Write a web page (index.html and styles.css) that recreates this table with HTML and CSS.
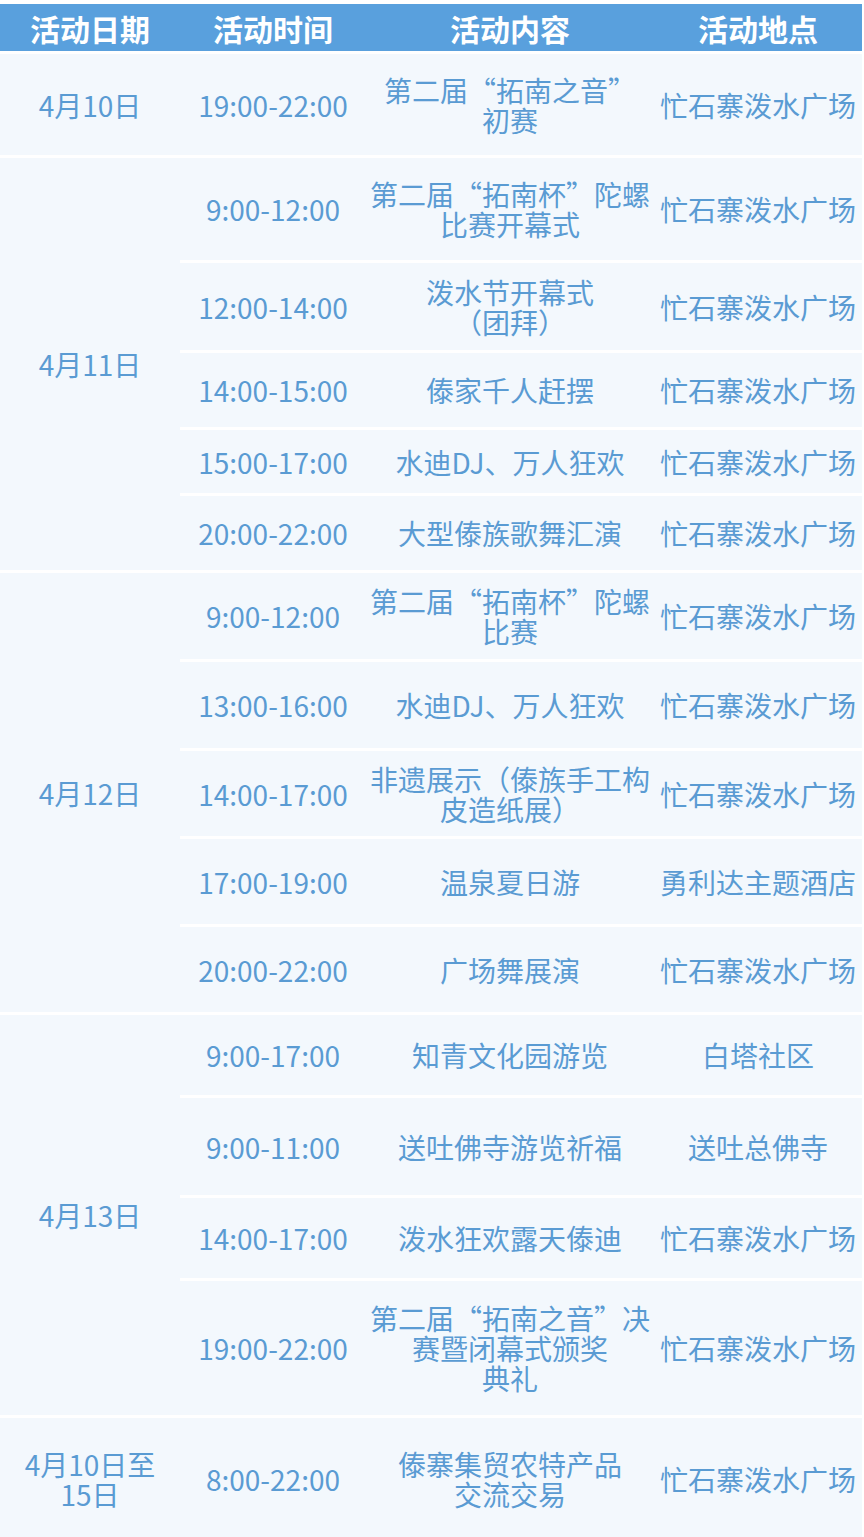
FILE: index.html
```html
<!DOCTYPE html>
<html lang="zh-CN">
<head>
<meta charset="utf-8">
<title>活动安排</title>
<link rel="stylesheet" href="styles.css">
</head>
<body>
<table class="schedule">
  <colgroup>
    <col class="c-date"><col class="c-time"><col class="c-content"><col class="c-place">
  </colgroup>
  <thead>
    <tr class="h-head"><th>活动日期</th><th>活动时间</th><th>活动内容</th><th>活动地点</th></tr>
  </thead>
  <tbody>
    <tr class="h104"><td>4月10日</td><td>19:00-22:00</td><td>第二届“拓南之音”<br>初赛</td><td>忙石寨泼水广场</td></tr>

    <tr class="h105"><td rowspan="5">4月11日</td><td>9:00-12:00</td><td>第二届“拓南杯”陀螺<br>比赛开幕式</td><td>忙石寨泼水广场</td></tr>
    <tr class="h90"><td>12:00-14:00</td><td>泼水节开幕式<br>（团拜）</td><td>忙石寨泼水广场</td></tr>
    <tr class="h77"><td>14:00-15:00</td><td>傣家千人赶摆</td><td>忙石寨泼水广场</td></tr>
    <tr class="h66"><td>15:00-17:00</td><td>水迪DJ、万人狂欢</td><td>忙石寨泼水广场</td></tr>
    <tr class="h77"><td>20:00-22:00</td><td>大型傣族歌舞汇演</td><td>忙石寨泼水广场</td></tr>

    <tr class="h89"><td rowspan="5">4月12日</td><td>9:00-12:00</td><td>第二届“拓南杯”陀螺<br>比赛</td><td>忙石寨泼水广场</td></tr>
    <tr class="h89"><td>13:00-16:00</td><td>水迪DJ、万人狂欢</td><td>忙石寨泼水广场</td></tr>
    <tr class="h88"><td>14:00-17:00</td><td>非遗展示（傣族手工构<br>皮造纸展）</td><td>忙石寨泼水广场</td></tr>
    <tr class="h88"><td>17:00-19:00</td><td>温泉夏日游</td><td>勇利达主题酒店</td></tr>
    <tr class="h88"><td>20:00-22:00</td><td>广场舞展演</td><td>忙石寨泼水广场</td></tr>

    <tr class="h83"><td rowspan="4">4月13日</td><td>9:00-17:00</td><td>知青文化园游览</td><td>白塔社区</td></tr>
    <tr class="h100"><td>9:00-11:00</td><td>送吐佛寺游览祈福</td><td>送吐总佛寺</td></tr>
    <tr class="h83"><td>14:00-17:00</td><td>泼水狂欢露天傣迪</td><td>忙石寨泼水广场</td></tr>
    <tr class="h137"><td>19:00-22:00</td><td>第二届“拓南之音”决<br>赛暨闭幕式颁奖<br>典礼</td><td>忙石寨泼水广场</td></tr>

    <tr class="h124"><td>4月10日至<br>15日</td><td>8:00-22:00</td><td>傣寨集贸农特产品<br>交流交易</td><td>忙石寨泼水广场</td></tr>
  </tbody>
</table>
</body>
</html>
```

FILE: styles.css
```css
html, body {
  margin: 0;
  padding: 0;
  background: #ffffff;
}

body {
  padding-top: 4px;
  font-family: "Noto Sans CJK SC", "Noto Sans", sans-serif;
}

.schedule {
  width: 862px;
  table-layout: fixed;
  border-collapse: separate;
  border-spacing: 0;
}

.c-date { width: 180px; }
.c-time { width: 186px; }
.c-content { width: 288px; }
.c-place { width: 208px; }

.schedule th,
.schedule td {
  padding: 0;
  text-align: center;
  vertical-align: middle;
  border-bottom: 3px solid #ffffff;
  white-space: nowrap;
}

.schedule th {
  background: #59a0dd;
  color: #ffffff;
  font-size: 30px;
  font-weight: 700;
  line-height: 1;
}

.schedule td {
  background: #f3f8fd;
  color: #5a9bd3;
  font-size: 28px;
  font-weight: 400;
  line-height: 30px;
}

.h-head { height: 50px; }
.h66 { height: 66px; }
.h77 { height: 77px; }
.h83 { height: 83px; }
.h88 { height: 88px; }
.h89 { height: 89px; }
.h90 { height: 90px; }
.h100 { height: 100px; }
.h104 { height: 104px; }
.h105 { height: 105px; }
.h124 { height: 124px; }
.h137 { height: 137px; }
```
